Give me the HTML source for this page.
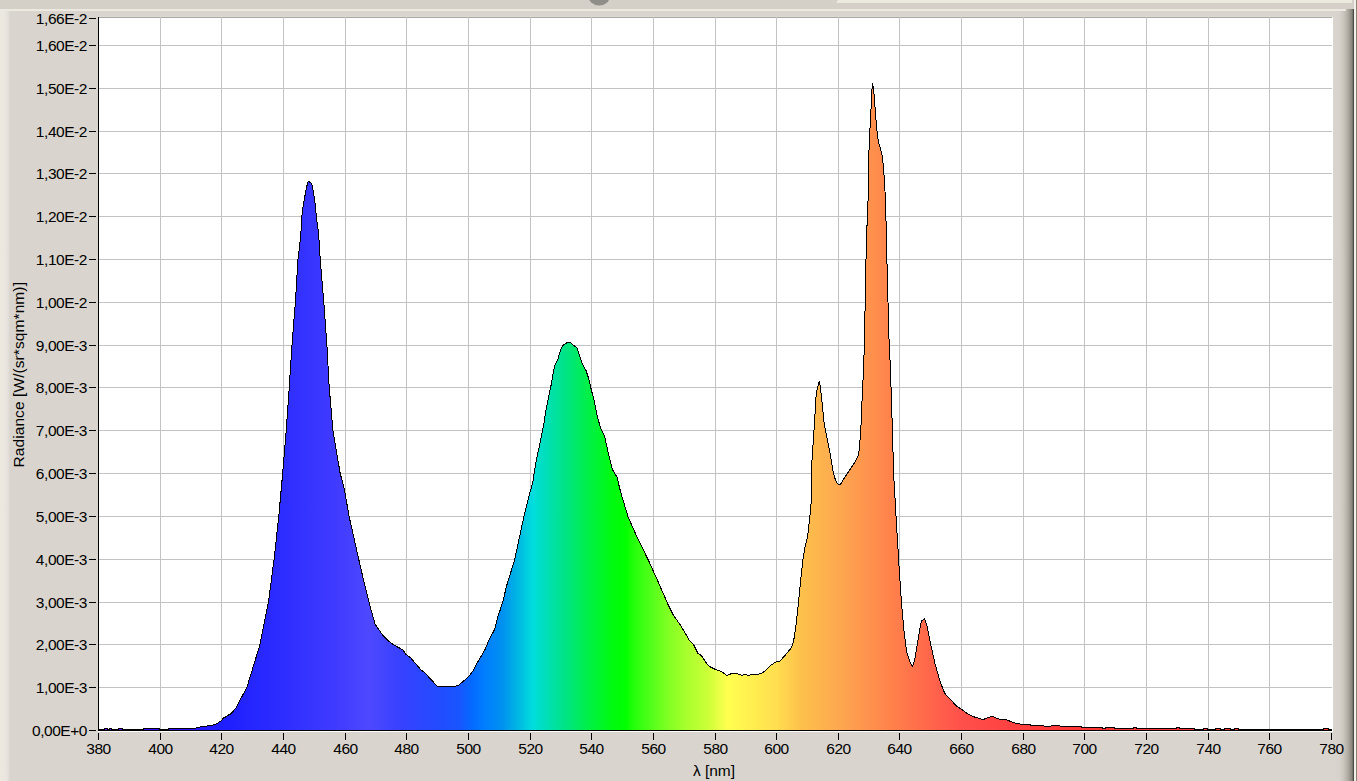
<!DOCTYPE html>
<html><head><meta charset="utf-8"><style>
html,body{margin:0;padding:0;}
body{width:1357px;height:781px;overflow:hidden;position:relative;background:#d9d5ce;font-family:"Liberation Sans",sans-serif;}
svg{position:absolute;left:0;top:0;}
text{font-family:"Liberation Sans",sans-serif;}
</style></head><body>
<svg width="1357" height="781" viewBox="0 0 1357 781">
<defs>
<linearGradient id="spec" x1="98" y1="0" x2="1333" y2="0" gradientUnits="userSpaceOnUse"><stop offset="0.0004" stop-color="rgb(110,0,255)"/><stop offset="0.0503" stop-color="rgb(50,10,255)"/><stop offset="0.1002" stop-color="rgb(30,30,255)"/><stop offset="0.1502" stop-color="rgb(45,45,255)"/><stop offset="0.1951" stop-color="rgb(65,60,255)"/><stop offset="0.2200" stop-color="rgb(78,72,255)"/><stop offset="0.2450" stop-color="rgb(55,65,255)"/><stop offset="0.2750" stop-color="rgb(35,75,255)"/><stop offset="0.2924" stop-color="rgb(25,85,255)"/><stop offset="0.3024" stop-color="rgb(5,105,255)"/><stop offset="0.3124" stop-color="rgb(0,125,255)"/><stop offset="0.3274" stop-color="rgb(0,145,240)"/><stop offset="0.3424" stop-color="rgb(0,190,225)"/><stop offset="0.3523" stop-color="rgb(0,222,222)"/><stop offset="0.3598" stop-color="rgb(0,222,195)"/><stop offset="0.3698" stop-color="rgb(0,225,160)"/><stop offset="0.3823" stop-color="rgb(0,230,120)"/><stop offset="0.3973" stop-color="rgb(0,240,70)"/><stop offset="0.4147" stop-color="rgb(0,250,20)"/><stop offset="0.4272" stop-color="rgb(0,255,0)"/><stop offset="0.4335" stop-color="rgb(35,255,12)"/><stop offset="0.4472" stop-color="rgb(80,255,25)"/><stop offset="0.4622" stop-color="rgb(130,255,35)"/><stop offset="0.4771" stop-color="rgb(170,255,45)"/><stop offset="0.4946" stop-color="rgb(205,255,55)"/><stop offset="0.5096" stop-color="rgb(255,255,80)"/><stop offset="0.5495" stop-color="rgb(255,222,80)"/><stop offset="0.5695" stop-color="rgb(253,192,75)"/><stop offset="0.5994" stop-color="rgb(253,168,80)"/><stop offset="0.6419" stop-color="rgb(255,130,75)"/><stop offset="0.6993" stop-color="rgb(255,80,75)"/><stop offset="0.7492" stop-color="rgb(255,62,62)"/><stop offset="0.7991" stop-color="rgb(255,54,54)"/><stop offset="0.9988" stop-color="rgb(255,50,50)"/></linearGradient>
<linearGradient id="lstrip" x1="0" y1="0" x2="1" y2="0">
<stop offset="0" stop-color="#ece8de"/><stop offset="0.45" stop-color="#ebe7e0"/><stop offset="0.7" stop-color="#e6e2dc"/><stop offset="0.9" stop-color="#dfdbd5"/><stop offset="1" stop-color="#dad6cf"/></linearGradient>
<linearGradient id="rpanel" x1="0" y1="0" x2="1" y2="0">
<stop offset="0" stop-color="#d9d5ce"/><stop offset="0.3" stop-color="#d7d3cc"/><stop offset="0.5" stop-color="#cac6be"/><stop offset="0.7" stop-color="#b2aea6"/><stop offset="0.88" stop-color="#8e8a80"/><stop offset="1" stop-color="#5c5a52"/></linearGradient>
</defs>
<rect x="0" y="0" width="1357" height="9" fill="#d4d0c8"/>
<path d="M838,0 L1352,0 L1352,3 L836,3 Z" fill="#ece9df"/>
<ellipse cx="599.2" cy="-4" rx="10.8" ry="9.5" fill="#8f8e88"/>
<rect x="0" y="11" width="10" height="770" fill="url(#lstrip)"/>
<rect x="0" y="9" width="1" height="772" fill="#ece8de"/>
<rect x="1333" y="9" width="21" height="772" fill="url(#rpanel)"/>
<rect x="1353" y="9" width="1" height="772" fill="#4c4a44"/>
<rect x="0" y="9" width="1346" height="2" fill="#ece9e0"/>
<rect x="1354" y="0" width="2" height="781" fill="#f2f0ea"/>
<rect x="1356" y="0" width="1" height="781" fill="#8a8470"/>
<rect x="98" y="16" width="1235" height="1" fill="#dedace"/>
<rect x="98" y="17" width="1235" height="715" fill="#ffffff"/>
<rect x="98" y="17" width="1234" height="1" fill="#a8a8a8"/>
<g stroke="#c3c3c3" stroke-width="1" shape-rendering="crispEdges"><line x1="160.5" y1="17" x2="160.5" y2="731"/><line x1="221.5" y1="17" x2="221.5" y2="731"/><line x1="283.5" y1="17" x2="283.5" y2="731"/><line x1="345.5" y1="17" x2="345.5" y2="731"/><line x1="406.5" y1="17" x2="406.5" y2="731"/><line x1="468.5" y1="17" x2="468.5" y2="731"/><line x1="530.5" y1="17" x2="530.5" y2="731"/><line x1="591.5" y1="17" x2="591.5" y2="731"/><line x1="653.5" y1="17" x2="653.5" y2="731"/><line x1="715.5" y1="17" x2="715.5" y2="731"/><line x1="776.5" y1="17" x2="776.5" y2="731"/><line x1="838.5" y1="17" x2="838.5" y2="731"/><line x1="899.5" y1="17" x2="899.5" y2="731"/><line x1="961.5" y1="17" x2="961.5" y2="731"/><line x1="1023.5" y1="17" x2="1023.5" y2="731"/><line x1="1084.5" y1="17" x2="1084.5" y2="731"/><line x1="1146.5" y1="17" x2="1146.5" y2="731"/><line x1="1208.5" y1="17" x2="1208.5" y2="731"/><line x1="1269.5" y1="17" x2="1269.5" y2="731"/><line x1="98" y1="687.5" x2="1332" y2="687.5"/><line x1="98" y1="644.5" x2="1332" y2="644.5"/><line x1="98" y1="602.5" x2="1332" y2="602.5"/><line x1="98" y1="559.5" x2="1332" y2="559.5"/><line x1="98" y1="516.5" x2="1332" y2="516.5"/><line x1="98" y1="473.5" x2="1332" y2="473.5"/><line x1="98" y1="430.5" x2="1332" y2="430.5"/><line x1="98" y1="387.5" x2="1332" y2="387.5"/><line x1="98" y1="345.5" x2="1332" y2="345.5"/><line x1="98" y1="302.5" x2="1332" y2="302.5"/><line x1="98" y1="259.5" x2="1332" y2="259.5"/><line x1="98" y1="216.5" x2="1332" y2="216.5"/><line x1="98" y1="173.5" x2="1332" y2="173.5"/><line x1="98" y1="131.5" x2="1332" y2="131.5"/><line x1="98" y1="88.5" x2="1332" y2="88.5"/><line x1="98" y1="45.5" x2="1332" y2="45.5"/></g>
<polygon points="98.5,728.5 100.0,729.5 104.0,729.5 104.5,728.5 107.0,728.5 107.5,729.5 109.0,729.5 109.5,728.5 111.0,728.5 111.5,729.5 118.0,729.5 118.5,728.5 122.0,728.5 122.5,729.5 143.0,729.5 143.5,728.5 159.0,728.5 159.5,729.5 168.0,729.5 168.5,728.5 195.0,728.5 197.0,727.5 203.0,726.5 211.0,725.5 215.0,724.5 217.0,723.5 218.6,722.5 220.0,721.5 221.5,720.5 223.7,717.8 226.1,716.8 228.2,715.2 231.1,713.7 232.5,712.0 233.9,710.3 236.0,708.2 237.2,705.7 238.4,703.3 239.7,700.8 240.9,698.6 247.0,687.0 260.0,644.5 268.4,602.3 274.0,560.0 278.7,517.0 282.7,473.0 286.2,431.0 289.2,388.0 291.9,346.0 295.4,302.0 298.0,259.2 299.7,245.5 301.0,231.5 301.9,216.4 303.5,203.3 305.5,193.0 306.7,186.6 308.0,182.2 308.7,181.3 310.6,182.8 311.9,184.1 313.5,192.4 315.1,203.3 316.3,216.4 318.3,231.5 319.5,245.5 320.2,259.2 323.8,302.0 326.9,345.0 329.2,387.0 332.9,430.0 340.1,473.0 344.5,490.0 349.0,516.0 358.0,556.0 363.2,578.7 369.9,605.6 375.0,623.9 382.0,634.3 387.1,639.8 393.2,644.6 402.7,649.8 406.1,654.6 410.4,657.6 420.8,669.7 425.1,673.1 437.2,686.2 441.0,686.4 445.0,686.4 449.0,687.0 453.1,686.5 457.8,685.7 462.5,682.1 469.2,676.0 473.2,670.6 477.3,662.6 481.3,655.9 485.3,649.1 488.0,642.4 492.7,633.0 494.7,629.0 497.4,618.2 500.1,610.2 503.4,600.0 506.1,587.5 510.8,572.2 514.6,559.9 519.2,538.4 523.0,520.7 525.3,510.7 530.0,492.3 533.4,480.0 534.2,472.2 536.1,461.5 538.0,452.3 540.4,441.5 542.7,430.0 544.6,420.0 545.4,413.0 548.4,397.6 550.7,387.3 553.0,374.5 554.6,366.1 557.6,360.0 560.7,350.0 563.0,345.4 567.6,342.3 570.7,342.6 574.5,346.1 576.9,347.7 579.2,354.6 582.2,363.8 586.1,370.7 588.4,377.6 590.7,387.3 594.5,402.2 597.6,417.6 600.7,428.3 604.5,436.0 607.6,450.0 612.3,469.2 616.9,476.9 620.5,491.5 628.2,517.2 638.5,540.3 648.7,560.8 659.0,583.8 668.0,604.4 673.1,614.6 680.0,624.6 685.1,632.8 689.7,641.0 693.3,644.0 697.9,653.3 701.5,655.8 707.7,665.0 710.7,667.1 715.8,669.7 721.0,671.2 726.8,675.5 732.4,673.2 737.3,673.7 742.3,675.5 745.1,674.1 748.6,675.5 751.4,674.4 759.2,674.1 763.4,672.3 770.4,665.6 776.8,661.4 779.6,661.4 784.5,656.0 791.5,647.6 793.7,640.6 795.8,626.5 797.9,608.2 799.3,594.1 800.7,580.0 802.7,561.4 804.6,549.1 807.6,536.8 810.0,515.3 811.5,499.2 811.8,480.0 811.9,462.2 813.4,439.1 814.7,420.7 815.7,400.7 816.5,391.5 819.3,381.1 820.3,386.9 821.9,400.7 824.2,423.8 827.3,439.1 830.3,454.5 833.4,472.9 835.3,479.5 837.2,483.7 839.5,484.9 841.2,483.4 842.6,480.6 848.8,471.4 854.9,462.2 858.0,456.0 859.5,448.3 861.1,423.8 861.8,406.9 862.6,385.4 863.4,375.0 864.3,345.0 865.2,302.0 866.0,259.0 867.3,216.0 868.3,195.0 868.3,166.7 869.7,133.3 870.8,113.3 871.7,93.3 872.5,83.3 873.7,90.0 875.0,106.7 876.7,128.3 878.3,141.7 880.8,150.0 882.5,156.7 884.2,176.7 885.5,200.0 885.9,216.0 886.9,259.0 888.0,302.0 889.2,345.0 890.8,375.0 891.0,387.0 892.4,430.0 893.6,473.0 896.0,516.0 898.2,552.0 899.5,573.7 901.4,602.1 903.7,628.2 906.6,651.9 910.1,662.6 912.5,666.6 914.9,659.0 918.4,637.7 921.3,621.1 924.4,618.7 926.7,624.6 930.3,642.4 935.0,663.7 939.8,680.3 943.3,690.0 945.5,694.4 950.6,699.6 956.5,706.2 961.0,708.8 968.3,714.3 972.7,716.5 983.1,719.5 991.9,716.4 1000.0,719.3 1005.9,719.7 1016.2,723.5 1024.0,724.6 1029.4,724.6 1032.0,725.6 1049.3,726.2 1054.6,725.6 1067.8,726.6 1080.0,726.5 1083.0,727.5 1102.0,727.5 1102.5,728.5 1105.0,728.5 1105.5,727.5 1114.0,727.5 1114.5,728.5 1133.0,728.5 1133.5,727.5 1136.0,727.5 1136.5,728.5 1176.0,728.5 1176.5,727.5 1179.0,727.5 1179.5,728.5 1194.0,728.5 1194.5,729.5 1203.0,729.5 1203.5,728.5 1207.0,728.5 1207.5,729.5 1215.0,729.5 1215.5,728.5 1220.0,728.5 1220.5,729.5 1224.0,729.5 1224.5,728.5 1230.0,728.5 1230.5,729.5 1234.0,729.5 1234.5,728.5 1238.0,728.5 1238.5,729.5 1323.0,729.5 1323.5,728.5 1328.0,728.5 1328.5,729.5 1331.0,729.5 1331.5,730.5 98.5,730.5" fill="url(#spec)" stroke="#000" stroke-width="1" stroke-linejoin="round" shape-rendering="crispEdges"/>
<rect x="98" y="730" width="1234" height="1" fill="#000"/>
<rect x="98" y="17" width="1" height="714" fill="#000"/>
<g stroke="#000" stroke-width="1" shape-rendering="crispEdges"><line x1="89" y1="730.5" x2="96" y2="730.5"/><line x1="89" y1="687.5" x2="96" y2="687.5"/><line x1="89" y1="644.5" x2="96" y2="644.5"/><line x1="89" y1="602.5" x2="96" y2="602.5"/><line x1="89" y1="559.5" x2="96" y2="559.5"/><line x1="89" y1="516.5" x2="96" y2="516.5"/><line x1="89" y1="473.5" x2="96" y2="473.5"/><line x1="89" y1="430.5" x2="96" y2="430.5"/><line x1="89" y1="387.5" x2="96" y2="387.5"/><line x1="89" y1="345.5" x2="96" y2="345.5"/><line x1="89" y1="302.5" x2="96" y2="302.5"/><line x1="89" y1="259.5" x2="96" y2="259.5"/><line x1="89" y1="216.5" x2="96" y2="216.5"/><line x1="89" y1="173.5" x2="96" y2="173.5"/><line x1="89" y1="131.5" x2="96" y2="131.5"/><line x1="89" y1="88.5" x2="96" y2="88.5"/><line x1="89" y1="45.5" x2="96" y2="45.5"/><line x1="89" y1="18.5" x2="96" y2="18.5"/><line x1="98.5" y1="733" x2="98.5" y2="740"/><line x1="160.5" y1="733" x2="160.5" y2="740"/><line x1="221.5" y1="733" x2="221.5" y2="740"/><line x1="283.5" y1="733" x2="283.5" y2="740"/><line x1="345.5" y1="733" x2="345.5" y2="740"/><line x1="406.5" y1="733" x2="406.5" y2="740"/><line x1="468.5" y1="733" x2="468.5" y2="740"/><line x1="530.5" y1="733" x2="530.5" y2="740"/><line x1="591.5" y1="733" x2="591.5" y2="740"/><line x1="653.5" y1="733" x2="653.5" y2="740"/><line x1="715.5" y1="733" x2="715.5" y2="740"/><line x1="776.5" y1="733" x2="776.5" y2="740"/><line x1="838.5" y1="733" x2="838.5" y2="740"/><line x1="899.5" y1="733" x2="899.5" y2="740"/><line x1="961.5" y1="733" x2="961.5" y2="740"/><line x1="1023.5" y1="733" x2="1023.5" y2="740"/><line x1="1084.5" y1="733" x2="1084.5" y2="740"/><line x1="1146.5" y1="733" x2="1146.5" y2="740"/><line x1="1208.5" y1="733" x2="1208.5" y2="740"/><line x1="1269.5" y1="733" x2="1269.5" y2="740"/><line x1="1331.5" y1="733" x2="1331.5" y2="740"/></g>
<g font-size="15.5" fill="#000" text-anchor="end" letter-spacing="-0.45"><text x="87" y="736.4">0,00E+0</text><text x="87" y="693.4">1,00E-3</text><text x="87" y="650.4">2,00E-3</text><text x="87" y="608.4">3,00E-3</text><text x="87" y="565.4">4,00E-3</text><text x="87" y="522.4">5,00E-3</text><text x="87" y="479.4">6,00E-3</text><text x="87" y="436.4">7,00E-3</text><text x="87" y="393.4">8,00E-3</text><text x="87" y="351.4">9,00E-3</text><text x="87" y="308.4">1,00E-2</text><text x="87" y="265.4">1,10E-2</text><text x="87" y="222.4">1,20E-2</text><text x="87" y="179.4">1,30E-2</text><text x="87" y="137.4">1,40E-2</text><text x="87" y="94.4">1,50E-2</text><text x="87" y="51.4">1,60E-2</text><text x="87" y="24.4">1,66E-2</text></g>
<g font-size="15.5" fill="#000" text-anchor="middle" letter-spacing="-0.45"><text x="98.5" y="754">380</text><text x="160.5" y="754">400</text><text x="221.5" y="754">420</text><text x="283.5" y="754">440</text><text x="345.5" y="754">460</text><text x="406.5" y="754">480</text><text x="468.5" y="754">500</text><text x="530.5" y="754">520</text><text x="591.5" y="754">540</text><text x="653.5" y="754">560</text><text x="715.5" y="754">580</text><text x="776.5" y="754">600</text><text x="838.5" y="754">620</text><text x="899.5" y="754">640</text><text x="961.5" y="754">660</text><text x="1023.5" y="754">680</text><text x="1084.5" y="754">700</text><text x="1146.5" y="754">720</text><text x="1208.5" y="754">740</text><text x="1269.5" y="754">760</text><text x="1331.5" y="754">780</text></g>
<text x="714" y="776" font-size="15.5" text-anchor="middle">λ [nm]</text>
<text transform="translate(23.5,374.8) rotate(-90)" font-size="15.5" text-anchor="middle" textLength="185.5" lengthAdjust="spacing">Radiance [W/(sr*sqm*nm)]</text>
</svg>
</body></html>
